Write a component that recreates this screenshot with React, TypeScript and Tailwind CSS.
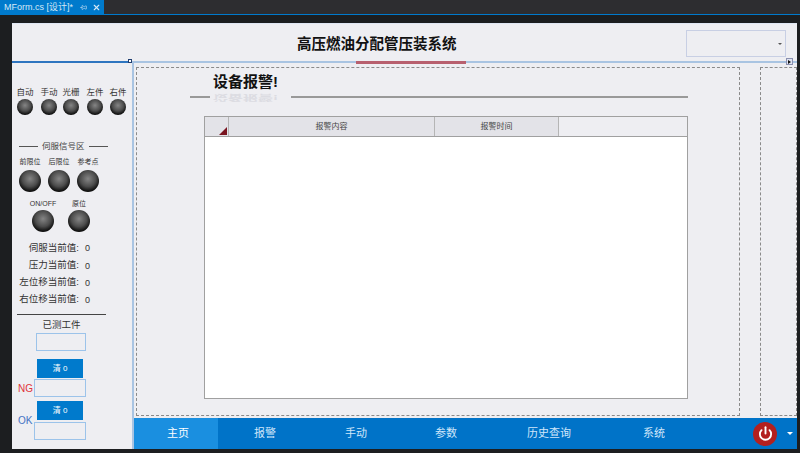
import { Pin, Power, X } from 'lucide-react';

const font = 'font-["Liberation_Sans","Noto_Sans_CJK_SC",sans-serif]';

function Lamp({ size }: { size: 'sm' | 'lg' }) {
  return (
    <div
      className={`rounded-full bg-[radial-gradient(circle_at_50%_40%,#858585_0%,#4c4c4c_45%,#101010_72%,#030303_100%)] ${
        size === 'sm' ? 'h-[16px] w-[16px]' : 'h-[22px] w-[22px]'
      }`}
    />
  );
}

function LampTop({ label, className }: { label: string; className: string }) {
  return (
    <div className={`flex flex-col items-center gap-px ${className}`}>
      <span className="whitespace-nowrap text-[8.5px] leading-[12px] text-[#333]">{label}</span>
      <Lamp size="sm" />
    </div>
  );
}

function LampBig({ label, className }: { label: string; className: string }) {
  return (
    <div className={`flex flex-col items-center ${className}`}>
      <span className="whitespace-nowrap text-[7px] leading-[10px] text-[#333]">{label}</span>
      <Lamp size="lg" />
    </div>
  );
}

function ValueRow({ label, className }: { label: string; className: string }) {
  return (
    <div className={`flex items-center justify-end pr-[42px] text-[9.5px] text-[#333] ${className}`}>
      <span className="whitespace-nowrap text-right">{label}</span>
      <span className="ml-[6px] pt-[2px] text-[9px]">0</span>
    </div>
  );
}

function Sidebar() {
  return (
    <aside className="flex w-[120px] shrink-0 flex-col bg-[#eeeef2]">
      <div className="mt-[23px] flex pl-[3px]">
        <LampTop label="自动" className="w-[20px]" />
        <LampTop label="手动" className="ml-[4px] w-[20px]" />
        <LampTop label="光栅" className="ml-[2px] w-[20px]" />
        <LampTop label="左件" className="ml-[4px] w-[20px]" />
        <LampTop label="右件" className="ml-[3px] w-[20px]" />
      </div>

      <div className="mt-[25px] flex items-center pl-[7px] text-[8.5px] leading-[12px] text-[#444]">
        <span className="h-px w-[19px] bg-[#555]" />
        <span className="mx-[4px] whitespace-nowrap">伺服信号区</span>
        <span className="h-px w-[19px] bg-[#555]" />
      </div>

      <div className="mt-[5px] flex pl-[6px]">
        <LampBig label="前限位" className="w-[24px] gap-[3px]" />
        <LampBig label="后限位" className="ml-[6px] w-[22px] gap-[3px]" />
        <LampBig label="参考点" className="ml-[7px] w-[22px] gap-[3px]" />
      </div>

      <div className="mt-[7px] flex pl-[20px]">
        <LampBig label="ON/OFF" className="w-[22px] gap-px" />
        <LampBig label="原位" className="ml-[14px] w-[22px] gap-px" />
      </div>

      <div className="mt-[7px] flex flex-col">
        <ValueRow label="伺服当前值:" className="h-[18px]" />
        <ValueRow label="压力当前值:" className="h-[17px]" />
        <ValueRow label="左位移当前值:" className="h-[17px]" />
        <ValueRow label="右位移当前值:" className="h-[17px]" />
      </div>

      <div className="ml-[5px] mt-[6px] h-px w-[89px] bg-[#444]" />
      <div className="ml-[5px] mt-[4px] w-[89px] text-center text-[9.5px] leading-[12px] text-[#333]">已测工件</div>
      <div className="ml-[24px] mt-[2px] h-[18px] w-[50px] border border-[#9cc3ea]" />

      <button className="ml-[25px] mt-[8px] h-[19px] w-[46px] bg-[#007acc] text-[8px] text-white">清 0</button>
      <div className="mt-px flex items-center">
        <span className="ml-[6px] w-[16px] text-[10px] text-[#e0323a]">NG</span>
        <div className="h-[18px] w-[52px] border border-[#9cc3ea]" />
      </div>

      <button className="ml-[25px] mt-[4px] h-[19px] w-[46px] bg-[#007acc] text-[8px] text-white">清 0</button>
      <div className="flex items-start">
        <span className="ml-[6px] mt-[-7px] w-[16px] text-[10px] text-[#4472c4]">OK</span>
        <div className="mt-[2px] h-[18px] w-[52px] border border-[#9cc3ea]" />
      </div>
    </aside>
  );
}

function AlarmPanel() {
  return (
    <section className="flex w-[604px] shrink-0 flex-col border border-dashed border-[#8a8a8a] bg-[#eeeef2]">
      <div className="flex h-[32px] items-end pl-[53px]">
        <div className="flex flex-col">
          <span className="mb-[3px] ml-[23px] text-[15px] font-bold leading-[16px] text-[#111]">设备报警!</span>
          <div className="flex h-[7px] items-center">
            <span className="h-[2px] w-[20px] bg-[#999]" />
            <span className="ml-[3px] w-[65px] -scale-y-50 whitespace-nowrap text-[15px] font-bold leading-[12px] text-[#dcdce2]">
              设备报警!
            </span>
            <span className="ml-[13px] h-[2px] w-[397px] bg-[#999]" />
          </div>
        </div>
      </div>

      <div className="ml-[67px] mt-[16px] flex h-[283px] w-[484px] flex-col border border-[#a0a0a0] bg-white">
        <div className="flex h-[20px] border-b border-[#a0a0a0] bg-[#e3e3e8] text-[8px] leading-[20px] text-[#444]">
          <div className="relative w-[24px] border-r border-[#b5b5b5]">
            <span className="absolute bottom-[1px] right-[1px] h-0 w-0 border-b-[8px] border-l-[8px] border-b-[#7a1520] border-l-transparent" />
          </div>
          <div className="w-[206px] border-r border-[#b5b5b5] text-center">报警内容</div>
          <div className="w-[124px] border-r border-[#b5b5b5] text-center">报警时间</div>
          <div className="flex-1 bg-[#eeeef2]" />
        </div>
      </div>
    </section>
  );
}

function Footer() {
  const tabs = [
    { label: '报警', width: 'w-[94px]' },
    { label: '手动', width: 'w-[88px]' },
    { label: '参数', width: 'w-[92px]' },
    { label: '历史查询', width: 'w-[114px]' },
    { label: '系统', width: 'w-[96px]' },
  ];

  return (
    <footer className="flex h-[31px] items-center bg-[#0073c8] text-[11px] text-[#cfe6fa]">
      <div className="flex h-full w-[84px] items-center justify-center bg-[#1a8fe0] pl-[4px] text-white">主页</div>
      {tabs.map((tab) => (
        <div key={tab.label} className={`flex h-full items-center justify-center ${tab.width}`}>
          {tab.label}
        </div>
      ))}
      <div className="ml-[51px] flex h-[24px] w-[24px] items-center justify-center rounded-full bg-[#b3201f]">
        <Power size={15} strokeWidth={3} className="text-white" />
      </div>
      <span className="ml-[10px] h-0 w-0 border-x-[3px] border-t-[3px] border-x-transparent border-t-white" />
    </footer>
  );
}

export default function App() {
  return (
    <div className={`flex h-[453px] w-[800px] flex-col overflow-hidden bg-[#1c1e20] ${font}`}>
      <div className="flex h-[14px] shrink-0 bg-[#2d2d30]">
        <div className="flex w-[104px] items-center bg-[#007acc] pl-[4px] text-[9px] leading-[14px] text-[#d5e8f6]">
          <span className="whitespace-nowrap">MForm.cs [设计]*</span>
          <Pin size={7} className="ml-[7px] rotate-90" />
          <X size={9} strokeWidth={3} className="ml-[5px]" />
        </div>
      </div>
      <div className="h-px shrink-0 bg-[#007acc]" />

      <div className="ml-[12px] mr-[3px] mt-[8px] flex h-[426px] shrink-0 flex-col border-t border-[#dfe6f3] bg-[#eeeef2]">
        <header className="relative flex h-[37px] shrink-0 items-center pl-[285px] pt-[4px]">
          <h1 className="text-[14.5px] font-bold text-[#111]">高压燃油分配管压装系统</h1>
          <div className="absolute right-[11px] top-[6px] flex h-[27px] w-[100px] items-center justify-end border border-[#c8cfe4] pr-[3px]">
            <span className="h-0 w-0 border-x-[2px] border-t-[2px] border-x-transparent border-t-[#555]" />
          </div>
        </header>

        <div className="relative flex h-[2px] shrink-0 bg-[#a9c4e2]">
          <div className="h-full w-[119px] bg-[#2e75c0]" />
          <span className="absolute left-[116px] top-[-2px] h-[4px] w-[4px] border border-[#1f3d70] bg-white" />
          <span className="absolute left-[344px] h-[3px] w-[110px] bg-[#b8606f]" />
          <span className="absolute right-[4px] top-[-3px] flex h-[7px] w-[7px] items-center justify-center border border-[#8a90b0] bg-[#dfe3f0]">
            <span className="h-0 w-0 border-y-[2px] border-l-[3px] border-y-transparent border-l-[#111]" />
          </span>
        </div>

        <div className="flex min-h-0 flex-1">
          <Sidebar />
          <div className="w-[2px] shrink-0 bg-[#a9c4e2]" />
          <main className="flex min-w-0 flex-1 flex-col overflow-hidden">
            <div className="flex min-h-0 flex-1 pl-[2px] pt-[4px]">
              <AlarmPanel />
              <div className="ml-[20px] flex-1 border border-dashed border-[#8a8a8a]" />
            </div>
            <div className="h-[2px] shrink-0" />
            <Footer />
          </main>
        </div>
      </div>
    </div>
  );
}
